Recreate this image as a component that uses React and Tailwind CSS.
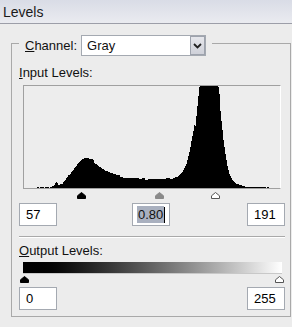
import React from "react";

// histogram outline: [column, height] pairs, columns 0..255, height 0..102
const SHAPE = [
  [0, 0], [12, 0], [13, 1], [26, 1], [29, 2], [32, 6], [34, 3], [38, 4],
  [42, 9], [46, 15], [51, 22], [56, 27], [60, 30], [64, 29], [69, 27],
  [74, 23], [80, 18], [86, 15], [94, 12], [104, 10], [116, 9], [131, 9],
  [141, 9], [148, 10], [154, 12], [158, 16], [162, 24], [165, 35],
  [168, 50], [171, 65], [173, 85], [175, 104], [193, 104], [195, 90],
  [197, 70], [199, 50], [201, 35], [203, 22], [205, 14], [208, 8],
  [212, 4], [218, 2], [231, 1], [241, 1], [242, 0], [244, 1], [245, 0],
  [255, 0],
];

const heightAt = (x) => {
  for (let i = 0; i < SHAPE.length - 1; i++) {
    const [x0, h0] = SHAPE[i];
    const [x1, h1] = SHAPE[i + 1];
    if (x >= x0 && x <= x1) {
      return h0 + ((h1 - h0) * (x - x0)) / (x1 - x0 || 1);
    }
  }
  return 0;
};

const histogramPath = () => {
  let d = "M0,102";
  for (let i = 0; i < 256; i++) {
    let h = heightAt(i);
    const n = (((i * 9301 + 49297) % 233280) / 233280 - 0.5) * (h * 0.08 + 0.6);
    if (h > 1.5) h = h + n;
    if (i > 12 && i < 30 && ((i * 7) % 5 === 0)) h = 0;
    h = Math.max(0, Math.min(102, Math.round(h)));
    d += ` L${i},${102 - h} L${i + 1},${102 - h}`;
  }
  return d + " L256,102 Z";
};

const Marker = ({ left, fill, stroke }) => (
  <svg
    width="9"
    height="7"
    viewBox="0 0 9 7"
    className="absolute top-0"
    style={{ left: left - 4 }}
  >
    <path d="M4.5 0.5 L8.5 3.8 V6.5 H0.5 V3.8 Z" fill={fill} stroke={stroke} strokeWidth="1" />
  </svg>
);

const Field = ({ children }) => (
  <div className="w-[38px] h-[23px] bg-white border border-[#a4a9b1] pl-[6px] flex items-center text-[13px] text-black">
    {children}
  </div>
);

const Levels = () => {
  return (
    <div
      className="w-[292px] h-[327px] bg-[#ececec] text-[#111] text-[13px] overflow-hidden"
      style={{ fontFamily: '"Liberation Sans", Arial, sans-serif' }}
    >
      <div className="h-[24px] bg-linear-to-b from-[#d9dce6] to-[#eaebf0] border-b border-[#9c9ea8] pl-[3px] flex items-center">
        <span className="text-[14px] leading-none text-[#1a1a1a]">Levels</span>
      </div>

      <fieldset className="ml-[11px] mt-[6px] w-[280px] border border-[#a9a9a9] pb-[6px]">
        <legend className="ml-[7px] px-[6px] pt-[5px] flex items-center">
          <span className="mr-[4px]">
            <span className="underline">C</span>hannel:
          </span>
          <div className="w-[125px] h-[21px] bg-white border border-[#a4a9b1] flex items-center justify-between">
            <span className="pl-[5px]">Gray</span>
            <div className="w-[15px] h-[19px] bg-linear-to-b from-[#e6e7ec] to-[#cfd1d9] border border-[#9ea3ad] flex items-center justify-center">
              <svg width="9" height="6" viewBox="0 0 9 6">
                <path d="M1 1 L4.5 4.5 L8 1" fill="none" stroke="#222" strokeWidth="1.8" />
              </svg>
            </div>
          </div>
        </legend>

        <div className="pl-[7px] pr-[5px]">
          <div className="mt-[9px] h-[16px] leading-[16px]">
            <span className="underline">I</span>nput Levels:
          </div>

          <div className="ml-[4px] mt-[4px] w-[258px] h-[104px] border border-[#a0a0a0] border-r-white bg-[#ededed]">
            <svg width="256" height="102" viewBox="0 0 256 102" shapeRendering="crispEdges">
              <path d={histogramPath()} fill="#000" />
            </svg>
          </div>

          <div className="relative ml-[5px] mt-[3px] h-[7px]">
            <Marker left={57} fill="#000" stroke="#000" />
            <Marker left={135} fill="#8a8a8a" stroke="#8a8a8a" />
            <Marker left={191} fill="#fff" stroke="#555" />
          </div>

          <div className="mt-[4px] flex justify-between items-center">
            <Field>57</Field>
            <div className="ml-[75px] w-[38px] h-[23px] bg-white border border-[#a4a9b1] pl-[4px] flex items-center text-[13px]">
              <span className="bg-[#a9b0bf] px-[1px] leading-[17px] text-[#111]">0.80</span>
              <span className="w-px h-[16px] bg-black" />
            </div>
            <div className="flex-1" />
            <Field>191</Field>
          </div>

          <div className="mt-[10px] border-t border-[#a9a9a9] border-b border-b-white" />

          <div className="mt-[5px] h-[16px] leading-[16px]">
            <span className="underline">O</span>utput Levels:
          </div>

          <div className="ml-[4px] mt-[3px] w-[259px] h-[12px] bg-linear-to-r from-black to-white border-b border-[#c8c8c8]" />

          <div className="relative ml-[5px] mt-[2px] h-[7px]">
            <Marker left={0} fill="#000" stroke="#000" />
            <Marker left={255} fill="#fff" stroke="#555" />
          </div>

          <div className="mt-[4px] flex justify-between">
            <Field>0</Field>
            <Field>255</Field>
          </div>
        </div>
      </fieldset>
    </div>
  );
};

export default function App() {
  return <Levels />;
}
